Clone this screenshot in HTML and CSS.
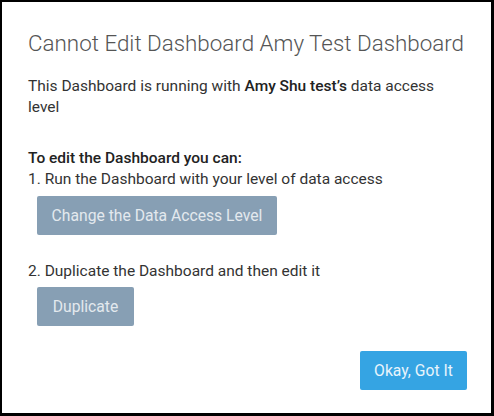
FILE: index.html
```html
<!DOCTYPE html>
<html>
<head>
<meta charset="utf-8">
<link rel="stylesheet" href="styles.css">
</head>
<body>
<div class="dialog">
  <h1 class="title">Cannot Edit Dashboard Amy Test Dashboard</h1>
  <p class="intro">This Dashboard is running with <b>Amy Shu test’s</b> data access level</p>
  <div class="steps">
    <div class="lead">To edit the Dashboard you can:</div>
    <div class="step">1. Run the Dashboard with your level of data access</div>
    <button class="btn btn-muted btn-change">Change the Data Access Level</button>
    <div class="step step2">2. Duplicate the Dashboard and then edit it</div>
    <button class="btn btn-muted btn-dup">Duplicate</button>
  </div>
  <div class="footer">
    <button class="btn btn-primary">Okay, Got It</button>
  </div>
</div>
</body>
</html>
```
FILE: styles.css
```css
* { box-sizing: border-box; }
html, body { margin: 0; padding: 0; background: #000; }
body {
  width: 494px;
  height: 416px;
  padding: 2px 3px 3px 2px;
  font-family: Roboto, "Liberation Sans", sans-serif;
}
.dialog {
  background: #fff;
  height: 100%;
  padding: 27px 24px 0 26px;
  display: flex;
  flex-direction: column;
}
.title {
  margin: 0;
  font-size: 22.4px;
  font-weight: 300;
  color: #555;
  line-height: 28px;
  white-space: nowrap;
}
.intro {
  margin: 19px 0 0;
  font-size: 15.5px;
  line-height: 21px;
  color: #333;
  padding-right: 30px;
}
.intro b { font-weight: 500; color: #222; }
.steps {
  margin-top: 30px;
  font-size: 15.5px;
  line-height: 21px;
  color: #333;
  display: flex;
  flex-direction: column;
  align-items: flex-start;
}
.lead { font-weight: 500; color: #222; }
.btn {
  border: none;
  border-radius: 2px;
  height: 39px;
  font-family: Roboto, "Liberation Sans", sans-serif;
  font-size: 15.7px;
  padding: 0;
  cursor: pointer;
}
.btn-muted {
  background: #879fb4;
  color: #e3e9ee;
  margin-left: 9px;
}
.btn-change { margin-top: 6px; width: 240px; }
.step2 { margin-top: 26px; }
.btn-dup { margin-top: 5px; width: 97px; }
.footer {
  display: flex;
  justify-content: flex-end;
  margin-top: 25px;
}
.btn-primary {
  background: #35a4e3;
  color: #e8f4fc;
  width: 107px;
}
```
